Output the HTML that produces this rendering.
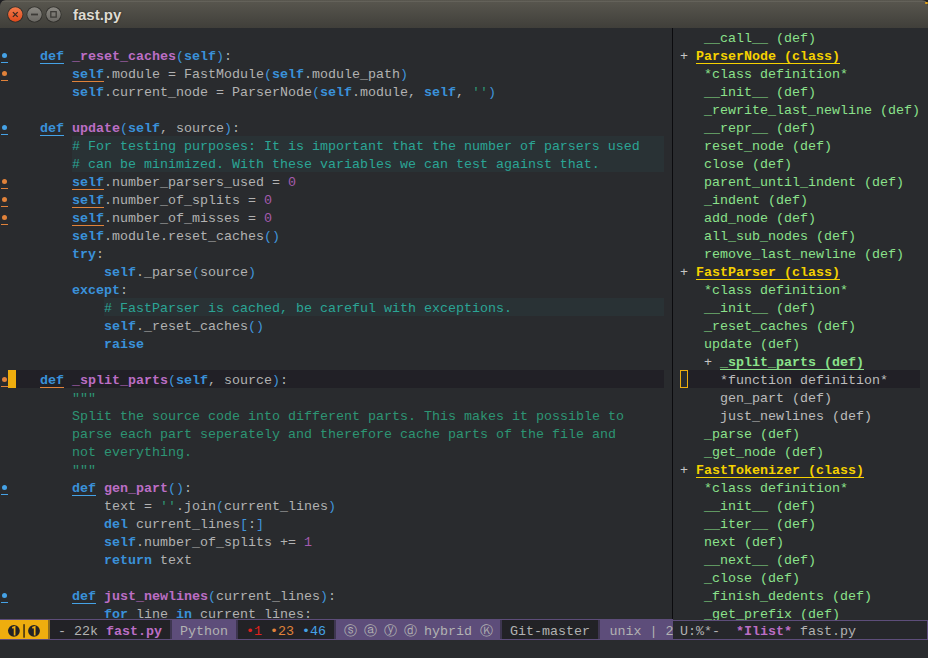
<!DOCTYPE html>
<html><head><meta charset="utf-8">
<style>
*{margin:0;padding:0;box-sizing:border-box}
html,body{width:928px;height:658px;overflow:hidden;background:#292b2e}
body{position:relative;font-family:"Liberation Mono",monospace;font-size:13.333px;color:#b2b2b2}
#title{position:absolute;left:0;top:0;width:928px;height:28px;background:linear-gradient(#59574f,#403f3a);border-radius:6px 6px 0 0}
#title .hl{position:absolute;left:2px;right:2px;top:1px;height:1px;background:#64625a;border-radius:6px 6px 0 0}
#ttext{position:absolute;left:73px;top:6px;text-shadow:0 0 2px #22211e;font-family:"Liberation Sans",sans-serif;font-weight:bold;font-size:15px;color:#dfdbd2}
.r{position:absolute;height:18px;line-height:18px;white-space:pre}
.L{left:8px;width:656px}
.R{left:680px;width:248px}
.k{color:#3a91da;font-weight:bold}
.f{color:#bc6ec5;font-weight:bold}
.p{color:#4094da}
.c{color:#a45bad}
.s{color:#2d9574}
.cm{color:#2ba595}
.cmbg{background:#292e34}
.dot{position:absolute;left:2px;width:5px;height:5px;border-radius:50%}
.dul{position:absolute;left:1px;width:7px;height:1px}
#sep{position:absolute;left:672px;top:28px;width:1px;height:591px;background:#0b0b0e}
.g{color:#8be28b}
.y{color:#f5d100;font-weight:bold}
.gb{color:#8be28b;font-weight:bold}
#ml{position:absolute;left:0;top:619px;width:673px;height:21px;background:#5d4d7a}
.seg{position:absolute;top:1px;height:19px;line-height:19px;white-space:pre}
.seg>span.t,.tx{position:relative;top:2px}
.dk{background:#222226}
#ml2{position:absolute;left:673px;top:620px;width:255px;height:20px;background:#26272b;border:1px solid #5d4d7a;border-left:none}
.pl{color:#c6c6c6}
.w{color:#bcbcbc}
.ci{display:inline-block;width:12px;font-style:normal;overflow:visible}
</style></head><body>
<div style="position:absolute;left:0;top:0;width:928px;height:10px;background:#1f1f22"></div>
<div id="title"><div class="hl"></div>
<svg style="position:absolute;left:0;top:0" width="70" height="28" viewBox="0 0 70 28">
<defs>
<linearGradient id="gc" x1="0" y1="0" x2="0" y2="1"><stop offset="0" stop-color="#f27b4b"/><stop offset="1" stop-color="#df4a1c"/></linearGradient>
<linearGradient id="gg" x1="0" y1="0" x2="0" y2="1"><stop offset="0" stop-color="#8a8882"/><stop offset="1" stop-color="#6a6863"/></linearGradient>
</defs>
<circle cx="15.3" cy="14.5" r="8" fill="#2f2e2a"/>
<circle cx="15.3" cy="14.5" r="7.2" fill="url(#gc)"/>
<path d="M12.9 12.1 L17.7 16.9 M17.7 12.1 L12.9 16.9" stroke="#3a2a22" stroke-width="1.3"/>
<circle cx="34.5" cy="14.5" r="8" fill="#2f2e2a"/>
<circle cx="34.5" cy="14.5" r="7.2" fill="url(#gg)"/>
<rect x="31" y="13.6" width="7" height="1.8" fill="#3c3b37"/>
<circle cx="53.5" cy="14.5" r="8" fill="#2f2e2a"/>
<circle cx="53.5" cy="14.5" r="7.2" fill="url(#gg)"/>
<rect x="50.8" y="11.7" width="5.4" height="5.4" fill="none" stroke="#3c3b37" stroke-width="1.3"/>
</svg>
<div id="ttext">fast.py</div>
<div style="position:absolute;left:925px;top:2px;width:3px;height:2px;border-radius:1px;background:#e3a51a"></div>
</div>
<div style="position:absolute;left:8px;top:370px;width:656px;height:18px;background:#212026"></div>
<div class="r L" style="top:30px"></div>
<div class="r L" style="top:48px">    <span class="k">def</span> <span class="f">_reset_caches</span><span class="p">(</span><span class="k">self</span><span class="p">)</span>:</div>
<div class="dot" style="top:53px;background:#45a2e6"></div><div class="dul" style="top:62px;background:#45a2e6"></div>
<div class="r L" style="top:66px">        <span class="k">self</span>.module = FastModule<span class="p">(</span><span class="k">self</span>.module_path<span class="p">)</span></div>
<div class="dot" style="top:71px;background:#e0823a"></div><div class="dul" style="top:80px;background:#e0823a"></div>
<div class="r L" style="top:84px">        <span class="k">self</span>.current_node = ParserNode<span class="p">(</span><span class="k">self</span>.module, <span class="k">self</span>, <span class="s">''</span><span class="p">)</span></div>
<div class="r L" style="top:102px"></div>
<div class="r L" style="top:120px">    <span class="k">def</span> <span class="f">update</span><span class="p">(</span><span class="k">self</span>, source<span class="p">)</span>:</div>
<div class="dot" style="top:125px;background:#45a2e6"></div><div class="dul" style="top:134px;background:#45a2e6"></div>
<div style="position:absolute;left:72px;top:136px;width:592px;height:18px;background:#293235"></div>
<div class="r L cm" style="top:138px">        # For testing purposes: It is important that the number of parsers used</div>
<div style="position:absolute;left:72px;top:154px;width:592px;height:18px;background:#293235"></div>
<div class="r L cm" style="top:156px">        # can be minimized. With these variables we can test against that.</div>
<div class="r L" style="top:174px">        <span class="k">self</span>.number_parsers_used = <span class="c">0</span></div>
<div class="dot" style="top:179px;background:#e0823a"></div><div class="dul" style="top:188px;background:#e0823a"></div>
<div class="r L" style="top:192px">        <span class="k">self</span>.number_of_splits = <span class="c">0</span></div>
<div class="dot" style="top:197px;background:#e0823a"></div><div class="dul" style="top:206px;background:#e0823a"></div>
<div class="r L" style="top:210px">        <span class="k">self</span>.number_of_misses = <span class="c">0</span></div>
<div class="dot" style="top:215px;background:#e0823a"></div><div class="dul" style="top:224px;background:#e0823a"></div>
<div class="r L" style="top:228px">        <span class="k">self</span>.module.reset_caches<span class="p">()</span></div>
<div class="r L" style="top:246px">        <span class="k">try</span>:</div>
<div class="r L" style="top:264px">            <span class="k">self</span>._parse<span class="p">(</span>source<span class="p">)</span></div>
<div class="r L" style="top:282px">        <span class="k">except</span>:</div>
<div style="position:absolute;left:104px;top:298px;width:560px;height:18px;background:#293235"></div>
<div class="r L cm" style="top:300px">            # FastParser is cached, be careful with exceptions.</div>
<div class="r L" style="top:318px">            <span class="k">self</span>._reset_caches<span class="p">()</span></div>
<div class="r L" style="top:336px">            <span class="k">raise</span></div>
<div class="r L" style="top:354px"></div>
<div class="r L" style="top:372px">    <span class="k">def</span> <span class="f">_split_parts</span><span class="p">(</span><span class="k">self</span>, source<span class="p">)</span>:</div>
<div class="dot" style="top:377px;background:#e0823a"></div><div class="dul" style="top:386px;background:#e0823a"></div>
<div class="r L" style="top:390px">        <span class="s">"""</span></div>
<div class="r L" style="top:408px">        <span class="s">Split the source code into different parts. This makes it possible to</span></div>
<div class="r L" style="top:426px">        <span class="s">parse each part seperately and therefore cache parts of the file and</span></div>
<div class="r L" style="top:444px">        <span class="s">not everything.</span></div>
<div class="r L" style="top:462px">        <span class="s">"""</span></div>
<div class="r L" style="top:480px">        <span class="k">def</span> <span class="f">gen_part</span><span class="p">()</span>:</div>
<div class="dot" style="top:485px;background:#45a2e6"></div><div class="dul" style="top:494px;background:#45a2e6"></div>
<div class="r L" style="top:498px">            text = <span class="s">''</span>.join<span class="p">(</span>current_lines<span class="p">)</span></div>
<div class="r L" style="top:516px">            <span class="k">del</span> current_lines<span class="p">[</span>:<span class="p">]</span></div>
<div class="r L" style="top:534px">            <span class="k">self</span>.number_of_splits += <span class="c">1</span></div>
<div class="r L" style="top:552px">            <span class="k">return</span> text</div>
<div class="r L" style="top:570px"></div>
<div class="r L" style="top:588px">        <span class="k">def</span> <span class="f">just_newlines</span><span class="p">(</span>current_lines<span class="p">)</span>:</div>
<div class="dot" style="top:593px;background:#45a2e6"></div><div class="dul" style="top:602px;background:#45a2e6"></div>
<div class="r L" style="top:606px">            <span class="k">for</span> line <span class="k">in</span> current_lines:</div>
<div style="position:absolute;left:8px;top:370px;width:8px;height:18px;background:#eead0e"></div>
<div id="sep"></div>
<div style="position:absolute;left:688px;top:370px;width:232px;height:18px;background:#212026"></div>
<div style="position:absolute;left:680px;top:370px;width:8px;height:18px;border:1px solid #eead0e"></div>
<div class="r R g" style="top:30px">   __call__ (def)</div>
<div class="r R g" style="top:48px"><span class="pl">+</span> <span class="y">ParserNode (class)</span></div>
<div class="r R g" style="top:66px">   *class definition*</div>
<div class="r R g" style="top:84px">   __init__ (def)</div>
<div class="r R g" style="top:102px">   _rewrite_last_newline (def)</div>
<div class="r R g" style="top:120px">   __repr__ (def)</div>
<div class="r R g" style="top:138px">   reset_node (def)</div>
<div class="r R g" style="top:156px">   close (def)</div>
<div class="r R g" style="top:174px">   parent_until_indent (def)</div>
<div class="r R g" style="top:192px">   _indent (def)</div>
<div class="r R g" style="top:210px">   add_node (def)</div>
<div class="r R g" style="top:228px">   all_sub_nodes (def)</div>
<div class="r R g" style="top:246px">   remove_last_newline (def)</div>
<div class="r R g" style="top:264px"><span class="pl">+</span> <span class="y">FastParser (class)</span></div>
<div class="r R g" style="top:282px">   *class definition*</div>
<div class="r R g" style="top:300px">   __init__ (def)</div>
<div class="r R g" style="top:318px">   _reset_caches (def)</div>
<div class="r R g" style="top:336px">   update (def)</div>
<div class="r R g" style="top:354px">   <span class="pl">+</span> <span class="gb">_split_parts (def)</span></div>
<div class="r R g" style="top:372px">     <span class="w">*function definition*</span></div>
<div class="r R g" style="top:390px">     <span class="w">gen_part (def)</span></div>
<div class="r R g" style="top:408px">     <span class="w">just_newlines (def)</span></div>
<div class="r R g" style="top:426px">   _parse (def)</div>
<div class="r R g" style="top:444px">   _get_node (def)</div>
<div class="r R g" style="top:462px"><span class="pl">+</span> <span class="y">FastTokenizer (class)</span></div>
<div class="r R g" style="top:480px">   *class definition*</div>
<div class="r R g" style="top:498px">   __init__ (def)</div>
<div class="r R g" style="top:516px">   __iter__ (def)</div>
<div class="r R g" style="top:534px">   next (def)</div>
<div class="r R g" style="top:552px">   __next__ (def)</div>
<div class="r R g" style="top:570px">   _close (def)</div>
<div class="r R g" style="top:588px">   _finish_dedents (def)</div>
<div class="r R g" style="top:606px">   _get_prefix (def)</div>
<div style="position:absolute;left:40px;top:63px;width:24px;height:1px;background:#45a2e6"></div>
<div style="position:absolute;left:72px;top:81px;width:32px;height:1px;background:#e0823a"></div>
<div style="position:absolute;left:40px;top:135px;width:24px;height:1px;background:#45a2e6"></div>
<div style="position:absolute;left:72px;top:189px;width:32px;height:1px;background:#e0823a"></div>
<div style="position:absolute;left:72px;top:207px;width:32px;height:1px;background:#e0823a"></div>
<div style="position:absolute;left:72px;top:225px;width:32px;height:1px;background:#e0823a"></div>
<div style="position:absolute;left:40px;top:387px;width:24px;height:1px;background:#e0823a"></div>
<div style="position:absolute;left:72px;top:495px;width:24px;height:1px;background:#45a2e6"></div>
<div style="position:absolute;left:72px;top:603px;width:24px;height:1px;background:#45a2e6"></div>
<div style="position:absolute;left:696px;top:63px;width:144px;height:1px;background:#f5d100"></div>
<div style="position:absolute;left:696px;top:279px;width:144px;height:1px;background:#f5d100"></div>
<div style="position:absolute;left:720px;top:369px;width:144px;height:1px;background:#8be28b"></div>
<div style="position:absolute;left:696px;top:477px;width:168px;height:1px;background:#f5d100"></div>
<div id="ml">
<div class="seg" style="left:0px;width:48px;background:#eead0e;overflow:hidden"><span class="tx"></span></div>
<div class="seg" style="left:50px;width:120px;background:#222226;overflow:hidden"><span class="tx"> - 22k <span class="f">fast.py</span> </span></div>
<div class="seg" style="left:172px;width:64px;overflow:hidden"><span class="tx"> Python </span></div>
<div class="seg" style="left:238px;width:96px;background:#222226;overflow:hidden"><span class="tx"> <span style="color:#e0211d">•1</span> <span style="color:#e0823a">•23</span> <span style="color:#45a2e6">•46</span> </span></div>
<div class="seg" style="left:336px;width:164px;overflow:hidden"><span class="tx"> <i class="ci">ⓢ</i> <i class="ci">ⓐ</i> <i class="ci">ⓨ</i> <i class="ci">ⓓ</i> hybrid <i class="ci">Ⓚ</i></span></div>
<div class="seg" style="left:502px;width:96px;background:#222226;overflow:hidden"><span class="tx"> Git-master </span></div>
<div class="seg" style="left:600px;width:73px;overflow:hidden"><span class="tx"><span style="padding-left:1.5px"> unix | 2</span></span></div>
<div style="position:absolute;left:170px;top:1px;width:2px;height:19px;background:#3e3650"></div>
<div style="position:absolute;left:236px;top:1px;width:2px;height:19px;background:#3e3650"></div>
<div style="position:absolute;left:334px;top:1px;width:2px;height:19px;background:#3e3650"></div>
<div style="position:absolute;left:500px;top:1px;width:2px;height:19px;background:#3e3650"></div>
<div style="position:absolute;left:598px;top:1px;width:2px;height:19px;background:#3e3650"></div>
<div style="position:absolute;left:48px;top:1px;width:2px;height:19px;background:#8f6d1c"></div>
<svg style="position:absolute;left:0;top:0" width="48" height="21" viewBox="0 0 48 21">
<circle cx="13.9" cy="11.8" r="5.9" fill="#222226"/>
<path d="M12.2 8.9 L14.6 7.9 L14.6 16.4" stroke="#eead0e" stroke-width="1.7" fill="none"/>
<rect x="23.3" y="5.2" width="1.5" height="13.5" fill="#3a2a10"/>
<circle cx="34" cy="11.8" r="5.9" fill="#222226"/>
<path d="M32.3 8.9 L34.7 7.9 L34.7 16.4" stroke="#eead0e" stroke-width="1.7" fill="none"/>
</svg>
</div>
<div id="ml2"><div class="seg" style="left:7px;top:0;height:18px;line-height:18px"><span class="tx">U:%*-  <span class="f">*Ilist*</span> fast.py</span></div></div>
</body></html>
